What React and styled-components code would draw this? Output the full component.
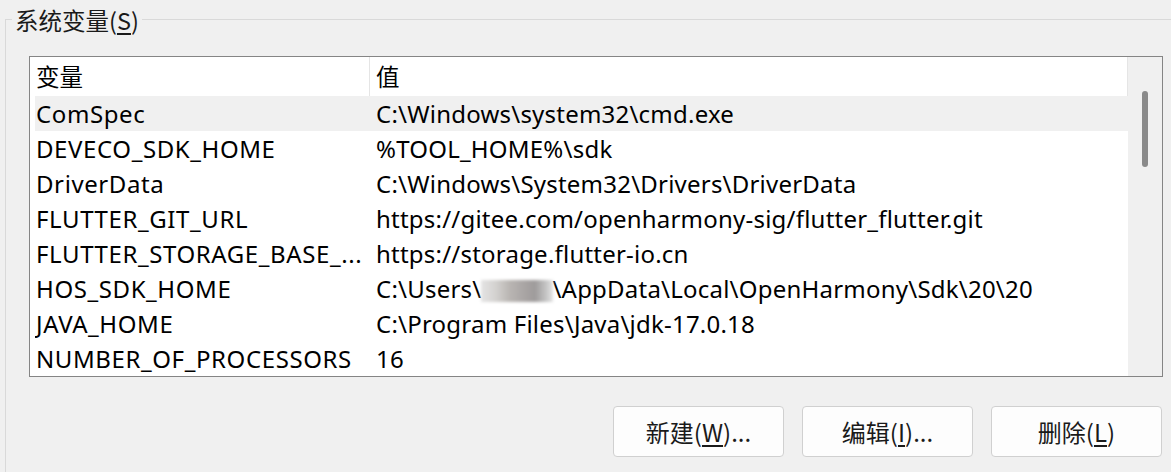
import React from "react";
import styled, { createGlobalStyle } from "styled-components";

const GlobalStyle = createGlobalStyle`
  html, body {
    margin: 0;
    padding: 0;
    background: #f0f0f0;
  }
  body {
    font-family: "Noto Sans", "Noto Sans CJK SC", sans-serif;
    color: #000;
  }
`;

const rows = [
  { name: "ComSpec", value: "C:\\Windows\\system32\\cmd.exe", selected: true },
  { name: "DEVECO_SDK_HOME", value: "%TOOL_HOME%\\sdk" },
  { name: "DriverData", value: "C:\\Windows\\System32\\Drivers\\DriverData" },
  { name: "FLUTTER_GIT_URL", value: "https://gitee.com/openharmony-sig/flutter_flutter.git" },
  { name: "FLUTTER_STORAGE_BASE_...", value: "https://storage.flutter-io.cn" },
  { name: "HOS_SDK_HOME", value: "user" },
  { name: "JAVA_HOME", value: "C:\\Program Files\\Java\\jdk-17.0.18" },
  { name: "NUMBER_OF_PROCESSORS", value: "16" },
];

const App = () => {
  return (
    <>
      <GlobalStyle />
      <Page>
        <GroupBox>
          <Legend>
            系统变量(<u>S</u>)
          </Legend>
          <ListBox>
            <Table>
              <HeaderRow>
                <HeaderCell>变量</HeaderCell>
                <HeaderCell $value>值</HeaderCell>
              </HeaderRow>
              {rows.map((r) => (
                <Row key={r.name} $selected={r.selected}>
                  <NameCell>{r.name}</NameCell>
                  <ValueCell>
                    {r.value === "user" ? (
                      <>
                        C:\Users\<Redacted />\AppData\Local\OpenHarmony\Sdk\20\20
                      </>
                    ) : (
                      r.value
                    )}
                  </ValueCell>
                </Row>
              ))}
            </Table>
            <ScrollTrack>
              <Thumb />
            </ScrollTrack>
          </ListBox>
          <Buttons>
            <Button>
              新建(<u>W</u>)...
            </Button>
            <Button>
              编辑(<u>I</u>)...
            </Button>
            <Button>
              删除(<u>L</u>)
            </Button>
          </Buttons>
        </GroupBox>
      </Page>
    </>
  );
};

export default App;

const Page = styled.div`
  width: 1171px;
  height: 472px;
  overflow: hidden;
  padding: 19px 0 0 5px;
  box-sizing: border-box;
`;

const GroupBox = styled.div`
  position: relative;
  border-top: 1px solid #d9d9d9;
  border-left: 1px solid #d9d9d9;
  height: 480px;
  padding: 36px 8px 0 23px;
`;

const Legend = styled.div`
  position: absolute;
  top: -12px;
  left: 6px;
  padding: 0 3px;
  background: #f0f0f0;
  font-size: 23.5px;
  line-height: 24px;
  font-family: "Noto Sans CJK SC", "Noto Sans", sans-serif;
  color: #1a1a1a;
  u {
    text-underline-offset: 3px;
  }
`;

const ListBox = styled.div`
  display: flex;
  width: 1134px;
  height: 321px;
  box-sizing: border-box;
  border: 1px solid #858585;
  background: #fff;
  overflow: hidden;
`;

const Table = styled.div`
  flex: 1;
  display: flex;
  flex-direction: column;
  padding-left: 5px;
  font-size: 24px;
`;

const HeaderRow = styled.div`
  display: grid;
  grid-template-columns: 334px 1fr;
  flex: 0 0 39px;
  border-right: 1px solid #e5e5e5;
`;

const HeaderCell = styled.div`
  display: flex;
  align-items: center;
  padding-left: ${(p) => (p.$value ? "6px" : "1px")};
  border-left: ${(p) => (p.$value ? "1px solid #e5e5e5" : "none")};
  font-family: "Noto Sans CJK SC", sans-serif;
  font-size: 23.5px;
  padding-bottom: 2px;
`;

const Row = styled.div`
  display: grid;
  grid-template-columns: 334px 1fr;
  flex: 0 0 35px;
  align-items: center;
  background: ${(p) => (p.$selected ? "#f0f0f0" : "transparent")};
  white-space: nowrap;
  line-height: 35px;
`;

const NameCell = styled.div`
  padding-left: 1px;
  overflow: hidden;
  letter-spacing: 0.6px;
`;

const ValueCell = styled.div`
  padding-left: 7px;
  overflow: hidden;
  letter-spacing: 0.22px;
`;

const Redacted = styled.span`
  display: inline-block;
  width: 72px;
  height: 22px;
  vertical-align: -4px;
  margin: 0 -1px 0 0;
  filter: blur(1.5px);
  background: linear-gradient(
    to right,
    #e4e4e4 0%,
    #d4d2d0 20%,
    #b9b5b2 40%,
    #a9a5a4 60%,
    #9e9b9b 75%,
    #c4c4c4 90%,
    #e4e4e4 100%
  );
`;

const ScrollTrack = styled.div`
  flex: 0 0 34px;
  background: #f0f0f0;
  display: flex;
  justify-content: center;
  padding-top: 34px;
  box-sizing: border-box;
`;

const Thumb = styled.div`
  width: 6px;
  height: 76px;
  border-radius: 3px;
  background: #8a8a8a;
`;

const Buttons = styled.div`
  display: flex;
  justify-content: flex-end;
  gap: 18px;
  width: 1133px;
  margin-top: 29px;
`;

const Button = styled.button`
  width: 171px;
  height: 51px;
  border: 1px solid #d0d0d0;
  border-radius: 4px;
  background: #fdfdfd;
  font-family: "Noto Sans CJK SC", "Noto Sans", sans-serif;
  font-size: 24px;
  color: #1a1a1a;
  padding: 0;
  u {
    text-underline-offset: 3px;
  }
`;
